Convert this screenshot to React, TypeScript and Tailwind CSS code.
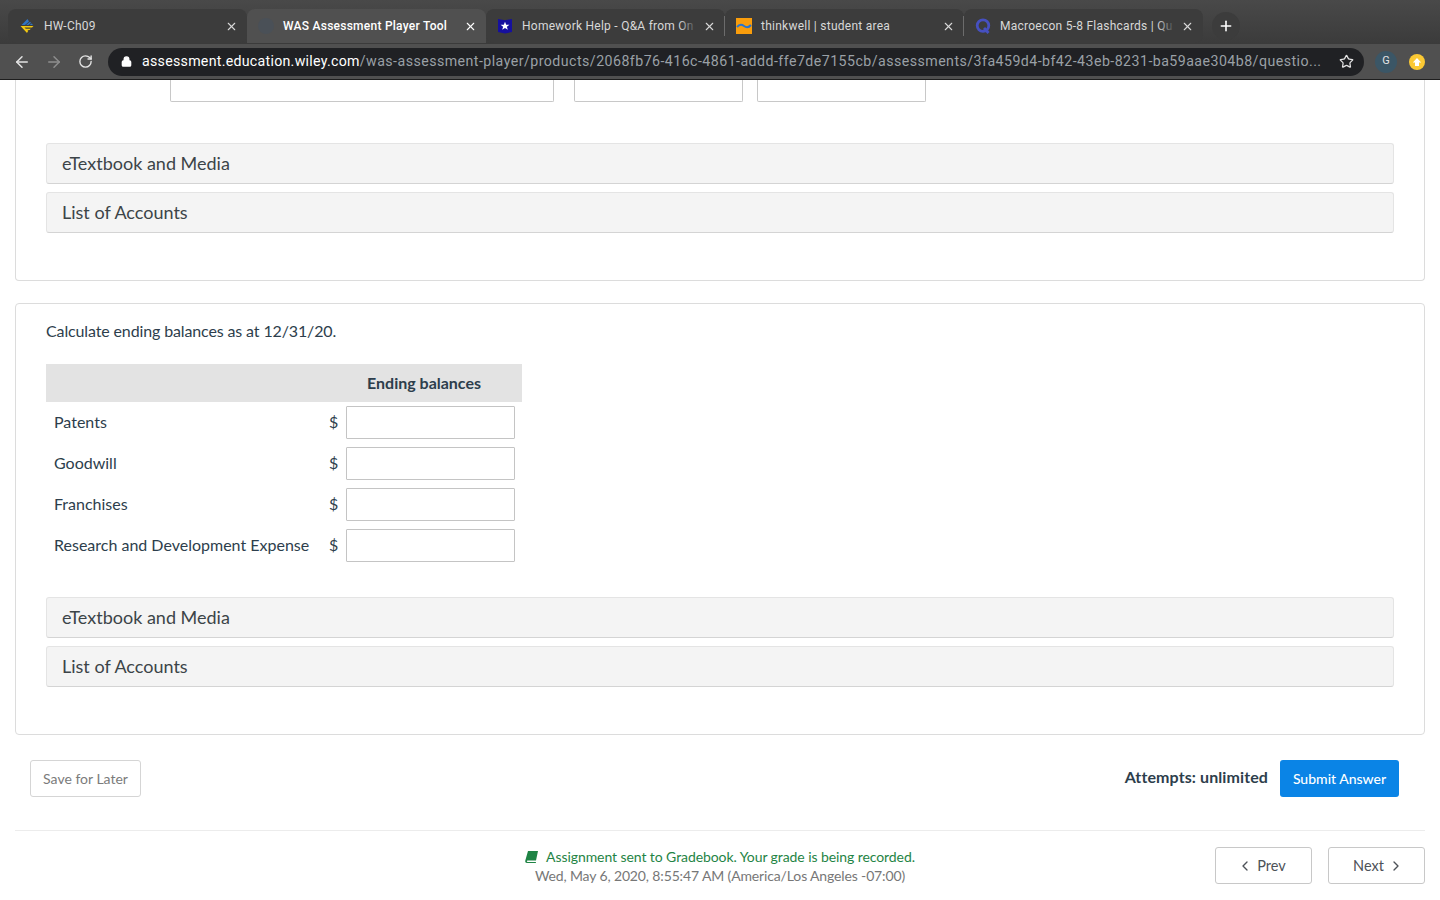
import { ArrowLeft, ArrowRight, ChevronLeft, ChevronRight, Lock, Plus, RotateCw, Star, X } from "lucide-react";

const tabs = [
  { title: "HW-Ch09", icon: "hw" },
  { title: "WAS Assessment Player Tool", icon: "globe", active: true },
  { title: "Homework Help - Q&A from On", icon: "shield", fade: true },
  { title: "thinkwell | student area", icon: "wave", sep: true },
  { title: "Macroecon 5-8 Flashcards | Qu", icon: "q", sep: true, fade: true },
];

function TabIcon({ name }: { name: string }) {
  if (name === "hw") {
    return (
      <svg width="16" height="16" viewBox="0 0 16 16" className="shrink-0">
        <path d="M8.5 1 L2.5 7 H6 L10 3.5 Z" fill="#2f74c4" />
        <path d="M7 7 L11 3.8 L12 4.8 L9.5 7 Z M10.5 7 L12.6 5.4 L14 6.5 L12.8 7 Z" fill="#2f74c4" />
        <path d="M1.5 8 H14.5 L13 9.6 H5.5 L6.8 10.8 H11.8 L10.6 12 H8 L9.4 12.6 L8 15 Z" fill="#f2c811" />
      </svg>
    );
  }
  if (name === "globe") {
    return <div className="h-4 w-4 shrink-0 rounded-full bg-[#4a5057]" />;
  }
  if (name === "shield") {
    return (
      <svg width="16" height="16" viewBox="0 0 16 16" className="shrink-0">
        <path d="M1 1 L8 2.2 L15 1 V14 L8 15.5 L1 14 Z" fill="#16109e" />
        <path d="M8 3.8 L9.2 6.8 H12.4 L9.9 8.8 L10.8 11.8 L8 10.1 L5.2 11.8 L6.1 8.8 L3.6 6.8 H6.8 Z" fill="#ffffff" />
      </svg>
    );
  }
  if (name === "wave") {
    return (
      <svg width="16" height="16" viewBox="0 0 16 16" className="shrink-0">
        <rect width="16" height="16" fill="#f99d0c" />
        <path d="M1 9 C3.5 6 6 6.5 8 8 S12.5 10 15 7" fill="none" stroke="#2a74cc" strokeWidth="2" />
      </svg>
    );
  }
  return (
    <svg width="16" height="16" viewBox="0 0 16 16" className="shrink-0">
      <circle cx="8" cy="7.6" r="5.8" fill="none" stroke="#4650c0" strokeWidth="2.8" />
      <path d="M9 10 L13.5 15" stroke="#4650c0" strokeWidth="2.8" />
    </svg>
  );
}

function Tab({ title, icon, active, sep, fade }: { title: string; icon: string; active?: boolean; sep?: boolean; fade?: boolean }) {
  return (
    <div className={`relative flex h-[34px] w-[239px] items-center rounded-t-lg pl-[11px] pr-[9px] ${active ? "bg-[#505050]" : "rounded-b-lg bg-[#3c3c3c]"}`}>
      {sep && <div className="absolute -left-px top-[7px] h-5 w-px bg-[#6c6c6c]" />}
      <TabIcon name={icon} />
      <span className={`relative ml-[9px] flex-1 whitespace-nowrap text-[12px] tracking-[0.25px] ${active ? "font-medium text-white" : "text-[#d8d8d8]"}`}>
        {title}
        {fade && <span className="absolute bottom-0 right-0 top-0 w-[18px] bg-gradient-to-r from-transparent to-[#3c3c3c]" />}
      </span>
      <X size={13} strokeWidth={2} className={`ml-[6px] shrink-0 ${active ? "text-white" : "text-[#d8d8d8]"}`} />
    </div>
  );
}

function BrowserChrome() {
  return (
    <div className="border-b border-[#1e1e1e] font-['Roboto',sans-serif]">
      <div className="flex h-[44px] items-end bg-gradient-to-b from-[#494949] to-[#3b3b3b] pb-px pl-2">
        {tabs.map((t) => (
          <Tab key={t.title} title={t.title} icon={t.icon} active={t.active} sep={t.sep} fade={t.fade} />
        ))}
        <div className="mb-[3px] ml-[9px] flex h-[28px] w-[28px] items-center justify-center rounded-full bg-[#3c3c3c]">
          <Plus size={16} strokeWidth={2.4} className="text-white" />
        </div>
      </div>
      <div className="flex h-[35px] items-center bg-[#505050] pl-[13px] pr-[14px]">
        <ArrowLeft size={18} strokeWidth={2} className="text-[#e4e4e4]" />
        <ArrowRight size={18} strokeWidth={2} className="ml-[14px] text-[#8e8e8e]" />
        <RotateCw size={15} strokeWidth={2.2} className="ml-[15px] text-[#e4e4e4]" />
        <div className="ml-[15px] flex h-[28px] w-[1256px] items-center rounded-full bg-[#202124] pl-[13px] pr-[10px]">
          <Lock size={11} strokeWidth={3} className="shrink-0 text-white" fill="white" />
          <span className="ml-[10px] flex-1 whitespace-nowrap text-[14.2px]">
            <span className="tracking-[0.27px] text-white">assessment.education.wiley.com</span>
            <span className="tracking-[0.45px] text-[#9aa0a6]">/was-assessment-player/products/2068fb76-416c-4861-addd-ffe7de7155cb/assessments/3fa459d4-bf42-43eb-8231-ba59aae304b8/questio...</span>
          </span>
          <Star size={15} strokeWidth={2} className="ml-2 shrink-0 text-[#e4e4e4]" />
        </div>
        <div className="ml-[11px] flex h-[22px] w-[22px] items-center justify-center rounded-full bg-[#3b5666] text-[11px] text-[#e4e4e4]">G</div>
        <div className="ml-[12px] flex h-[16px] w-[16px] items-center justify-center rounded-full bg-[#fbc934]">
          <svg width="10" height="10" viewBox="0 0 10 10" fill="white">
            <path d="M5 1 L9.2 5.4 H7 V9 H3 V5.4 H0.8 Z" />
          </svg>
        </div>
      </div>
    </div>
  );
}

function Accordion({ title }: { title: string }) {
  return (
    <div className="flex h-[41px] items-center rounded-[3px] border border-[#e4e4e4] border-b-[#d4d4d4] bg-[#f4f4f4] pl-[15px] text-[18px] text-[#3c4448]">
      {title}
    </div>
  );
}

function AccordionGroup() {
  return (
    <div className="flex flex-col gap-2">
      <Accordion title="eTextbook and Media" />
      <Accordion title="List of Accounts" />
    </div>
  );
}

function BalanceRow({ label }: { label: string }) {
  return (
    <div className="flex h-[33px] items-center">
      <span className="w-[283px] pb-[2px] pl-2 text-[16px] text-[#2d3e4c]">{label}</span>
      <span className="w-[17px] pb-[2px] text-[16px] text-[#2d3e4c]">$</span>
      <input className="h-[33px] w-[169px] rounded-[1px] border border-[#c4c4c4] bg-white" />
    </div>
  );
}

export default function App() {
  return (
    <div className="h-[900px] overflow-hidden bg-white font-['Lato',sans-serif]">
      <BrowserChrome />

      <div className="px-[15px]">
        {/* Cut off card */}
        <div className="h-[201px] rounded-b-[4px] border border-t-0 border-[#dcdcdc] px-[30px]">
          <div className="flex pl-[124px]">
            <div className="h-[22px] w-[384px] rounded-b-[2px] border border-t-0 border-[#c8c8c8]" />
            <div className="ml-5 h-[22px] w-[169px] rounded-b-[2px] border border-t-0 border-[#c8c8c8]" />
            <div className="ml-[14px] h-[22px] w-[169px] rounded-b-[2px] border border-t-0 border-[#c8c8c8]" />
          </div>
          <div className="mt-[41px]">
            <AccordionGroup />
          </div>
        </div>

        {/* Ending balances */}
        <div className="mt-[22px] h-[432px] rounded-[4px] border border-[#dcdcdc] px-[30px]">
          <p className="mt-[17px] text-[16px] leading-[20px] tracking-[-0.13px] text-[#2d3e4c]">Calculate ending balances as at 12/31/20.</p>
          <div className="mt-[23px] w-[476px]">
            <div className="flex h-[38px] items-center bg-[#e3e3e3] pl-[321px] text-[16px] font-bold text-[#2d3e4c]">Ending balances</div>
            <div className="mt-1 flex flex-col gap-2">
              <BalanceRow label="Patents" />
              <BalanceRow label="Goodwill" />
              <BalanceRow label="Franchises" />
              <BalanceRow label="Research and Development Expense" />
            </div>
          </div>
          <div className="mt-[35px]">
            <AccordionGroup />
          </div>
        </div>

        {/* Submit row */}
        <div className="mt-[25px] flex items-start justify-between pl-[15px] pr-[26px]">
          <button className="h-[37px] w-[111px] rounded-[3px] border border-[#d5d5d5] text-[14px] text-[#7b7b7b]">Save for Later</button>
          <div className="flex items-start">
            <span className="mr-3 mt-[6px] text-[16px] font-bold leading-[22px] tracking-[0.1px] text-[#2d3e4c]">Attempts: unlimited</span>
            <button className="h-[37px] w-[119px] rounded-[3px] bg-[#0a84e6] text-[14px] font-medium text-white">Submit Answer</button>
          </div>
        </div>

        {/* Footer */}
        <div className="mt-[33px] flex items-start border-t border-[#ececec] pt-4">
          <div className="flex-1" />
          <div className="text-center text-[14px] leading-[19px]">
            <div className="flex items-center justify-center tracking-[-0.08px] text-[#1f8445]">
              <svg width="13" height="12" viewBox="0 0 13 12" className="mr-2" fill="currentColor">
                <path d="M3 0 H13 L11 9.5 H2.6 C1.6 9.5 1.6 11 2.6 11 H11 L10.8 12 H2 C0.4 12 0 10.8 0.3 9.5 Z" />
              </svg>
              Assignment sent to Gradebook. Your grade is being recorded.
            </div>
            <div className="tracking-[-0.14px] text-[#777777]">Wed, May 6, 2020, 8:55:47 AM (America/Los Angeles -07:00)</div>
          </div>
          <div className="flex flex-1 justify-end">
            <button className="flex h-[37px] w-[97px] items-center justify-center gap-1 rounded-[3px] border border-[#c8c8c8] pr-1 text-[14.5px] text-[#4d5258]">
              <ChevronLeft size={16} strokeWidth={2} />
              Prev
            </button>
            <button className="ml-4 flex h-[37px] w-[97px] items-center justify-center gap-1 rounded-[3px] border border-[#c8c8c8] pl-1 text-[14.5px] text-[#4d5258]">
              Next
              <ChevronRight size={16} strokeWidth={2} />
            </button>
          </div>
        </div>
      </div>
    </div>
  );
}
